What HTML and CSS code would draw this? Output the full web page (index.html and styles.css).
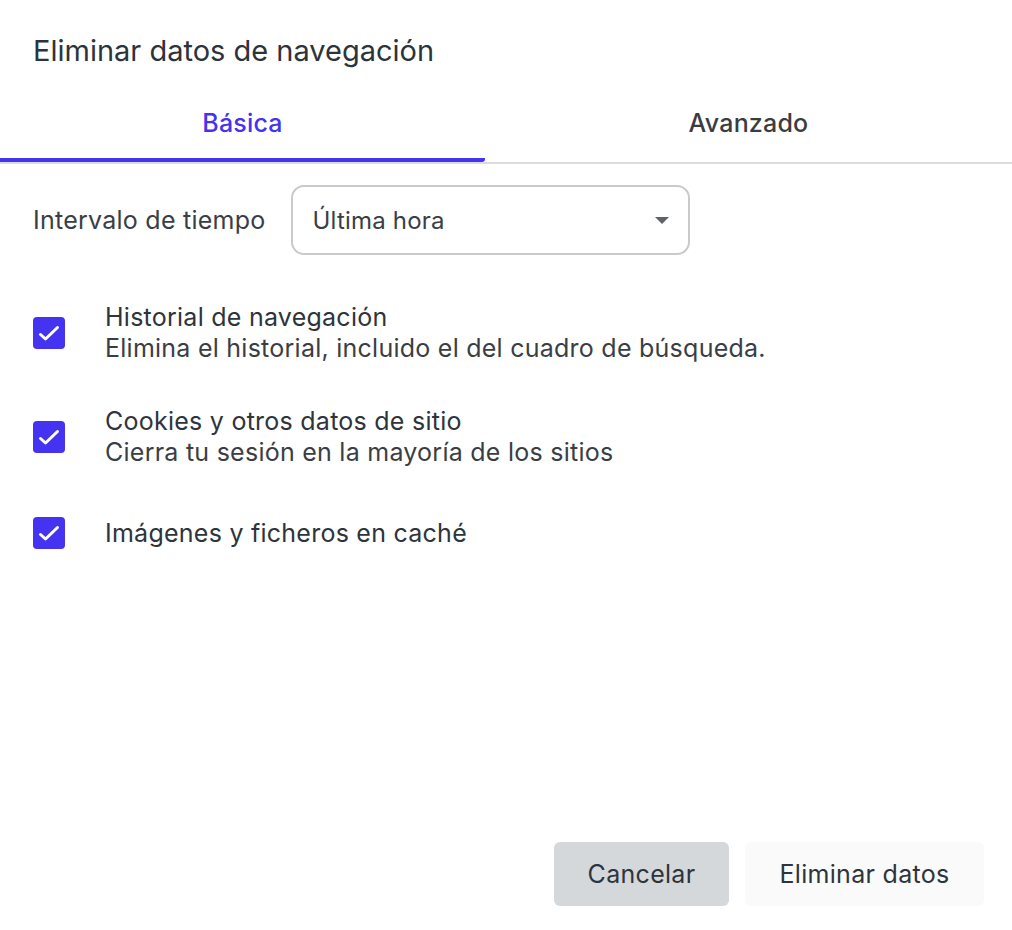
FILE: index.html
```html
<!DOCTYPE html>
<html lang="es">
<head>
<meta charset="utf-8">
<title>Eliminar datos de navegación</title>
<link rel="stylesheet" href="styles.css">
</head>
<body>
<div class="dialog">
  <h1 class="title">Eliminar datos de navegación</h1>
  <div class="tabs">
    <div class="tab active">Básica</div>
    <div class="tab">Avanzado</div>
  </div>
  <div class="content">
    <div class="range-row">
      <span class="range-label">Intervalo de tiempo</span>
      <div class="select">
        <span>Última hora</span>
        <svg class="arrow" width="14" height="7" viewBox="0 0 14 7"><path d="M0 0 L14 0 L7 7 Z" fill="#5f6368"/></svg>
      </div>
    </div>
    <div class="options">
      <div class="option">
        <span class="checkbox"><svg width="32" height="32" viewBox="0 0 32 32"><path d="M7.5 17.5 L12.5 22 L24.5 10.5" fill="none" stroke="#fff" stroke-width="3" stroke-linecap="round" stroke-linejoin="round"/></svg></span>
        <div class="option-text">
          <div class="option-title">Historial de navegación</div>
          <div class="option-desc">Elimina el historial, incluido el del cuadro de búsqueda.</div>
        </div>
      </div>
      <div class="option">
        <span class="checkbox"><svg width="32" height="32" viewBox="0 0 32 32"><path d="M7.5 17.5 L12.5 22 L24.5 10.5" fill="none" stroke="#fff" stroke-width="3" stroke-linecap="round" stroke-linejoin="round"/></svg></span>
        <div class="option-text">
          <div class="option-title">Cookies y otros datos de sitio</div>
          <div class="option-desc">Cierra tu sesión en la mayoría de los sitios</div>
        </div>
      </div>
      <div class="option">
        <span class="checkbox"><svg width="32" height="32" viewBox="0 0 32 32"><path d="M7.5 17.5 L12.5 22 L24.5 10.5" fill="none" stroke="#fff" stroke-width="3" stroke-linecap="round" stroke-linejoin="round"/></svg></span>
        <div class="option-text">
          <div class="option-title">Imágenes y ficheros en caché</div>
        </div>
      </div>
    </div>
  </div>
  <div class="actions">
    <button class="btn cancel">Cancelar</button>
    <button class="btn confirm">Eliminar datos</button>
  </div>
</div>
</body>
</html>
```
FILE: styles.css
```css
html, body {
  margin: 0;
  padding: 0;
  background: #ffffff;
}
body {
  font-family: Inter, "Noto Sans", "Liberation Sans", sans-serif;
  color: #2e343b;
  width: 1012px;
  height: 930px;
  overflow: hidden;
}
.dialog {
  display: flex;
  flex-direction: column;
  height: 930px;
}
.title {
  margin: 0;
  padding: 33px 33px 0 33px;
  font-size: 29px;
  font-weight: 400;
  line-height: 36px;
  color: #2d333a;
}
.tabs {
  display: flex;
  margin-top: 38px;
  border-bottom: 2px solid #dcdce0;
}
.tab {
  flex: 1;
  text-align: center;
  font-size: 25px;
  font-weight: 500;
  letter-spacing: 0.2px;
  color: #3c3c3f;
  padding-bottom: 19px;
  line-height: 32px;
  border-bottom: 4px solid transparent;
}
.tab.active {
  flex: 0 0 485px;
  color: #4433f0;
  border-bottom-color: #4433f0;
  border-radius: 0 0 3px 0;
}
.content {
  flex: 1;
  padding: 0 33px;
}
.range-row {
  display: flex;
  align-items: center;
  gap: 25px;
  margin-top: 21px;
}
.range-label {
  font-size: 25px;
  letter-spacing: 0.25px;
  color: #3a3e44;
}
.select {
  box-sizing: border-box;
  width: 399px;
  height: 70px;
  border: 2px solid #cacaca;
  border-radius: 13px;
  display: flex;
  align-items: center;
  justify-content: space-between;
  padding: 0 19px 0 20px;
  font-size: 24px;
  letter-spacing: 0.2px;
  color: #3a3e44;
}
.options {
  display: flex;
  flex-direction: column;
  gap: 42px;
  margin-top: 47px;
}
.option {
  display: flex;
  align-items: center;
  gap: 40px;
  min-height: 46px;
}
.checkbox {
  flex: 0 0 32px;
  width: 32px;
  height: 32px;
  border-radius: 4px;
  background: #4433f0;
  display: flex;
}
.option-text {
  font-size: 25px;
  letter-spacing: 0.25px;
  line-height: 31px;
}
.option-title {
  color: #2e343b;
}
.option-desc {
  color: #3a3e44;
}
.actions {
  display: flex;
  justify-content: flex-end;
  gap: 16px;
  padding: 0 28px 24px 0;
}
.btn {
  font-family: inherit;
  font-size: 25px;
  letter-spacing: 0.3px;
  color: #2e343b;
  height: 64px;
  border: none;
  border-radius: 6px;
  cursor: pointer;
}
.btn.cancel {
  width: 175px;
  background: #d5d8db;
}
.btn.confirm {
  width: 239px;
  background: #fafafa;
}
```
